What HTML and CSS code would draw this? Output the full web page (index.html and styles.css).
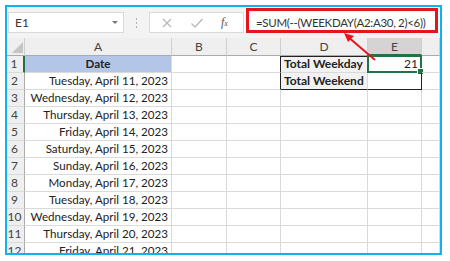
FILE: index.html
```html
<!DOCTYPE html>
<html lang="en">
<head>
    <meta charset="UTF-8">
    <title>Weekday count</title>
    <link rel="stylesheet" href="styles.css">
</head>
<body>
    <div class="frame">
        <div class="formula-bar">
            <div class="name-box">
                <span>E1</span>
                <span class="drop"></span>
            </div>
            <div class="grip"><i></i><i></i><i></i></div>
            <div class="fx-box">
                <svg width="12" height="12" viewBox="0 0 12 12"><path d="M2 2 L10 10 M10 2 L2 10" stroke="#b8b8b8" stroke-width="1.3" fill="none"/></svg>
                <svg width="14" height="12" viewBox="0 0 14 12"><path d="M1.5 6.5 L5 10 L12.5 2" stroke="#b8b8b8" stroke-width="1.3" fill="none"/></svg>
                <span class="fx">f<sub>x</sub></span>
            </div>
            <div class="formula">=SUM(--(WEEKDAY(A2:A30, 2)&lt;6))</div>
        </div>

        <div class="sheet">
            <div class="c ch corner"><span class="tri"></span></div>
            <div class="c ch">A</div>
            <div class="c ch">B</div>
            <div class="c ch">C</div>
            <div class="c ch">D</div>
            <div class="c ch active">E</div>
            <div class="c ch"></div>

            <div class="c rh active">1</div>
            <div class="c head">Date</div>
            <div class="c"></div>
            <div class="c edge"></div>
            <div class="c label top">Total Weekday</div>
            <div class="c num top selected">21<span class="sel"><span class="handle"></span></span></div>
            <div class="c"></div>

            <div class="c rh">2</div>
            <div class="c date">Tuesday, April 11, 2023</div>
            <div class="c"></div>
            <div class="c edge"></div>
            <div class="c label dark">Total Weekend</div>
            <div class="c num dark"></div>
            <div class="c"></div>

            <div class="c rh">3</div>
            <div class="c date">Wednesday, April 12, 2023</div>
            <div class="c"></div><div class="c"></div><div class="c"></div><div class="c"></div><div class="c"></div>

            <div class="c rh">4</div>
            <div class="c date">Thursday, April 13, 2023</div>
            <div class="c"></div><div class="c"></div><div class="c"></div><div class="c"></div><div class="c"></div>

            <div class="c rh">5</div>
            <div class="c date">Friday, April 14, 2023</div>
            <div class="c"></div><div class="c"></div><div class="c"></div><div class="c"></div><div class="c"></div>

            <div class="c rh">6</div>
            <div class="c date">Saturday, April 15, 2023</div>
            <div class="c"></div><div class="c"></div><div class="c"></div><div class="c"></div><div class="c"></div>

            <div class="c rh">7</div>
            <div class="c date">Sunday, April 16, 2023</div>
            <div class="c"></div><div class="c"></div><div class="c"></div><div class="c"></div><div class="c"></div>

            <div class="c rh">8</div>
            <div class="c date">Monday, April 17, 2023</div>
            <div class="c"></div><div class="c"></div><div class="c"></div><div class="c"></div><div class="c"></div>

            <div class="c rh">9</div>
            <div class="c date">Tuesday, April 18, 2023</div>
            <div class="c"></div><div class="c"></div><div class="c"></div><div class="c"></div><div class="c"></div>

            <div class="c rh">10</div>
            <div class="c date">Wednesday, April 19, 2023</div>
            <div class="c"></div><div class="c"></div><div class="c"></div><div class="c"></div><div class="c"></div>

            <div class="c rh">11</div>
            <div class="c date">Thursday, April 20, 2023</div>
            <div class="c"></div><div class="c"></div><div class="c"></div><div class="c"></div><div class="c"></div>

            <div class="c rh">12</div>
            <div class="c date">Friday, April 21, 2023</div>
            <div class="c"></div><div class="c"></div><div class="c"></div><div class="c"></div><div class="c"></div>
        </div>

        <!-- annotation: red box round the formula and arrow to E1 -->
        <div class="callout"></div>
        <svg class="arrow" width="40" height="32" viewBox="0 0 40 32">
            <path d="M32 28 L4 4" stroke="#e8141b" stroke-width="2" fill="none"/>
            <path d="M1 1 L11 4 L5 10 Z" fill="#e8141b"/>
        </svg>
    </div>
</body>
</html>
```

FILE: styles.css
```css
body {
    margin: 0;
    background: #ffffff;
    font-family: Lato, "Liberation Sans", sans-serif;
}

.frame {
    position: relative;
    box-sizing: border-box;
    width: 437px;
    height: 250px;
    margin: 5px;
    border: 2px solid #0fb2ee;
    overflow: hidden;
}

.formula-bar {
    display: flex;
    align-items: center;
    height: 31px;
    padding-left: 1px;
    background: #f3f3f3;
}

.name-box {
    box-sizing: border-box;
    flex-shrink: 0;
    display: flex;
    align-items: center;
    justify-content: space-between;
    width: 116px;
    height: 21px;
    padding: 0 5px 0 6px;
    background: #fff;
    border: 1px solid #dadada;
    font-size: 12px;
    color: #333;
}

.drop {
    width: 0;
    height: 0;
    border-left: 3px solid transparent;
    border-right: 3px solid transparent;
    border-top: 3px solid #777;
}

.grip {
    flex-shrink: 0;
    display: flex;
    flex-direction: column;
    gap: 2px;
    margin: 0 12px;
}

.grip i {
    width: 1px;
    height: 2px;
    background: #b0b0b0;
}

.fx-box {
    box-sizing: border-box;
    flex-shrink: 0;
    display: flex;
    align-items: center;
    gap: 17px;
    width: 95px;
    height: 21px;
    padding-left: 11px;
    background: #fff;
    border: 1px solid #dadada;
}

.fx {
    font-family: "Liberation Serif", serif;
    font-style: italic;
    font-size: 12px;
    color: #555;
}

.fx sub {
    font-size: 8px;
    vertical-align: 0;
}

.formula {
    flex: 1;
    min-width: 0;
    overflow: hidden;
    box-sizing: border-box;
    height: 21px;
    padding-left: 12px;
    background: #fff;
    font-size: 11.5px;
    letter-spacing: -0.3px;
    line-height: 21px;
    color: #333;
    white-space: nowrap;
}

.sheet {
    display: grid;
    grid-template-columns: 18px 147px 55px 54px 87px 54px 1fr;
    grid-template-rows: 18px;
    grid-auto-rows: 17px;
}

.c {
    box-sizing: border-box;
    position: relative;
    border-right: 1px solid #dadada;
    border-bottom: 1px solid #dadada;
    padding: 0 3px;
    font-size: 11.6px;
    line-height: 16px;
    color: #222;
    white-space: nowrap;
}

.ch {
    background: #efefef;
    border-bottom-color: #ababab;
    border-right-color: #d0d0d0;
    text-align: center;
    font-size: 12px;
    line-height: 18px;
    color: #444;
}

.ch.active {
    background: #d4d4d4;
    border-bottom: 2px solid #217346;
}

.corner {
    padding: 0;
}

.tri {
    position: absolute;
    right: 1px;
    bottom: 2px;
    width: 0;
    height: 0;
    border-left: 11px solid transparent;
    border-bottom: 11px solid #c5c5c5;
}

.rh {
    padding: 0 2px 0 0;
    background: #efefef;
    border-right-color: #ababab;
    text-align: center;
    font-size: 12px;
    color: #444;
}

.rh.active {
    border-right: 2px solid #217346;
}

.head {
    background: #b4c6e7;
    text-align: center;
    font-weight: bold;
}

.date {
    text-align: right;
}

.edge {
    border-right-color: #222;
}

.label {
    background: #f2f2f2;
    font-weight: bold;
    font-size: 12px;
}

.num {
    text-align: right;
    font-size: 12px;
    border-right-color: #222;
}

.top {
    box-shadow: inset 0 1px 0 #222;
}

.dark {
    border-bottom-color: #222;
}

.sel {
    position: absolute;
    top: -1px;
    left: -1px;
    right: -1px;
    bottom: -1px;
    border: 2px solid #217346;
}

.handle {
    position: absolute;
    right: -4px;
    bottom: -4px;
    width: 5px;
    height: 5px;
    background: #217346;
    border: 1px solid #fff;
}

.callout {
    position: absolute;
    left: 239px;
    top: 1px;
    width: 192px;
    height: 25px;
    box-sizing: border-box;
    border: 3px solid #e8141b;
}

.arrow {
    position: absolute;
    left: 336px;
    top: 25px;
}
```
